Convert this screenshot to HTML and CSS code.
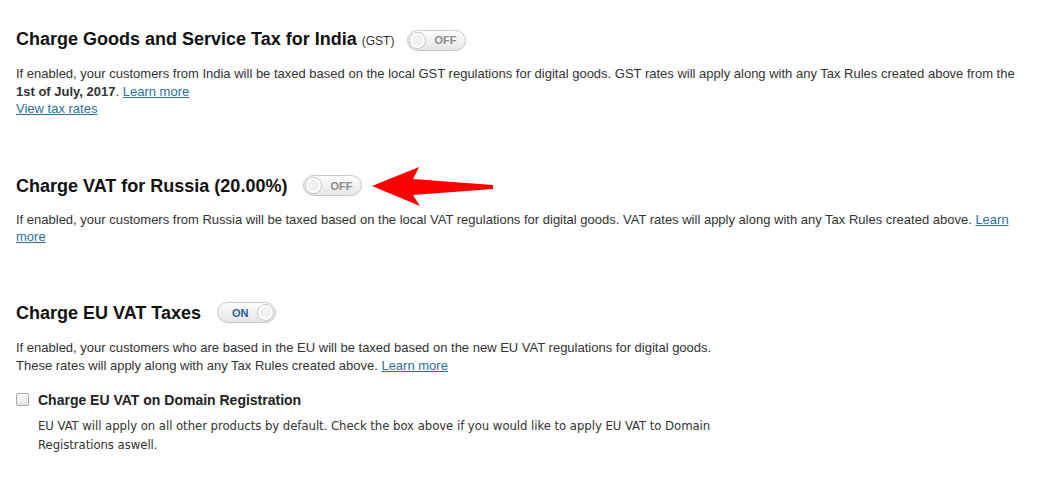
FILE: index.html
```html
<!DOCTYPE html>
<html>
<head>
<meta charset="utf-8">
<link rel="stylesheet" href="styles.css">
</head>
<body>
<div class="page">
  <section class="setting">
    <div class="head">
      <h2 class="title">Charge Goods and Service Tax for India <small>(GST)</small></h2>
      <span class="toggle off"><span class="knob"></span><span class="lbl">OFF</span></span>
    </div>
    <p class="desc">If enabled, your customers from India will be taxed based on the local GST regulations for digital goods. GST rates will apply along with any Tax Rules created above from the <b>1st of July, 2017</b>. <a href="#">Learn more</a><br><a href="#">View tax rates</a></p>
  </section>

  <section class="setting s2">
    <div class="head">
      <h2 class="title">Charge VAT for Russia (20.00%)</h2>
      <span class="toggle off"><span class="knob"></span><span class="lbl">OFF</span></span>
      <svg class="arrow" width="122" height="39" viewBox="0 0 122 39">
        <polygon points="0,19 47,0 41,12 121,18 121,22 41,28 48,39" fill="#ff0000"/>
      </svg>
    </div>
    <p class="desc">If enabled, your customers from Russia will be taxed based on the local VAT regulations for digital goods. VAT rates will apply along with any Tax Rules created above. <a href="#">Learn more</a></p>
  </section>

  <section class="setting s3">
    <div class="head">
      <h2 class="title">Charge EU VAT Taxes</h2>
      <span class="toggle on"><span class="lbl">ON</span><span class="knob"></span></span>
    </div>
    <p class="desc">If enabled, your customers who are based in the EU will be taxed based on the new EU VAT regulations for digital goods.<br>These rates will apply along with any Tax Rules created above. <a href="#">Learn more</a></p>
    <label class="check"><span class="box"></span>Charge EU VAT on Domain Registration</label>
    <p class="note">EU VAT will apply on all other products by default. Check the box above if you would like to apply EU VAT to Domain Registrations aswell.</p>
  </section>
</div>
</body>
</html>
```
FILE: styles.css
```css
html, body { margin: 0; padding: 0; background: #fff; }
body { font-family: "Liberation Sans", Arial, sans-serif; color: #333; }
.page { padding: 29px 16px 0 16px; display: flex; flex-direction: column; }
.setting { display: flex; flex-direction: column; }
.s2 { margin-top: 57px; }
.s3 { margin-top: 56px; }
.head { display: flex; align-items: center; height: 22px; position: relative; }
.title { margin: 0; font-size: 18px; font-weight: bold; color: #111; line-height: 22px; }
.title small { font-size: 12px; font-weight: normal; color: #333; }
.toggle { display: inline-flex; align-items: center; box-sizing: border-box; width: 59px; height: 21px; border: 1px solid #c8c8c8; border-radius: 11px; background: linear-gradient(#fdfdfd, #e6e6e6); margin-left: 16px; font-size: 11px; font-weight: bold; }
.toggle.off { color: #8a8a8a; }
.toggle.on { color: #1f5f9e; justify-content: space-between; }
.knob { width: 17px; height: 17px; box-sizing: border-box; border-radius: 50%; border: 1px solid #c4c4c4; background: radial-gradient(circle, #f0f0f0 0 5px, #ffffff 6px); box-shadow: 0 0 0 1px #fff inset; }
.toggle.off .knob { margin-left: 1px; }
.toggle.off .lbl { margin-left: 8px; }
.toggle.on .lbl { margin-left: 14px; }
.toggle.on .knob { margin-right: 1px; }
.setting:first-child .toggle { margin-left: 13px; }
.arrow { position: absolute; left: 356px; top: -8px; }
.desc { margin: 14px 0 0 0; font-size: 13px; line-height: 17.5px; color: #333; }
.s3 .desc { margin-top: 15px; line-height: 18px; }
a { color: #2b6f9a; text-decoration: underline; }
.check { display: flex; align-items: center; margin-top: 16px; font-size: 14px; font-weight: bold; color: #222; height: 18px; }
.box { width: 11px; height: 11px; border: 1px solid #a8a8a8; border-radius: 2px; background: linear-gradient(#fbfbfb, #e4e4e4); margin-right: 9px; }
.note { margin: 7px 0 0 22px; max-width: 685px; font-family: "DejaVu Sans Condensed", "DejaVu Sans", sans-serif; font-stretch: condensed; font-size: 13px; letter-spacing: -0.05px; line-height: 19px; color: #333; }
```
